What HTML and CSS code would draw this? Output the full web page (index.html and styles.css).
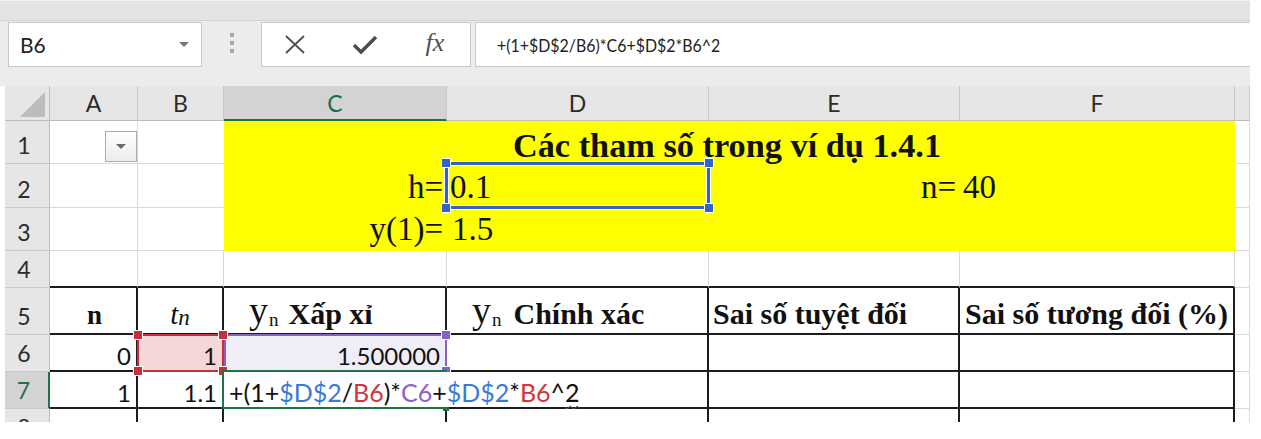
FILE: index.html
```html
<!DOCTYPE html>
<html>
<head>
<meta charset="utf-8">
<link rel="stylesheet" href="styles.css">
</head>
<body>
<div class="app">
  <div class="topband"></div>
  <div class="fbar">
    <div class="namebox"><span class="nb-text">B6</span><span class="caret"></span></div>
    <div class="grip"><i></i><i></i><i></i></div>
    <div class="btns">
      <span class="btn b-x"><svg width="22" height="19" viewBox="0 0 22 19"><path d="M2 1 L20 18 M20 1 L2 18" stroke="#4d4d4d" stroke-width="1.8" fill="none"/></svg></span>
      <span class="btn b-ok"><svg width="26" height="21" viewBox="0 0 26 21"><path d="M2 11 L9 18 L24 3" stroke="#4d4d4d" stroke-width="3.4" fill="none"/></svg></span>
      <span class="btn fx">fx</span>
    </div>
    <div class="finput"><span class="ftext">+(1+$D$2/B6)*C6+$D$2*B6^2</span></div>
  </div>
  <div class="sheetwrap">
    <div class="sheet">
      <div class="corner"><svg width="45" height="35" viewBox="0 0 45 35"><polygon points="15,31 40,31 40,6" fill="#bcbcbc"/></svg></div>
      <div class="ch">A</div><div class="ch">B</div><div class="ch csel">C</div><div class="ch">D</div><div class="ch">E</div><div class="ch">F</div><div class="ch"></div>

      <div class="rh">1</div>
      <div class="c a1"><span class="dd"><i></i></span></div>
      <div class="c nb"></div>
      <div class="c y tnr title">Các tham số trong ví dụ 1.4.1</div>
      <div class="c"></div>

      <div class="rh">2</div>
      <div class="c"></div>
      <div class="c nb"></div>
      <div class="c y tnr r2 right">h=</div>
      <div class="c y tnr r2 d2">0.1<span class="rng blue"><i class="hd tl"></i><i class="hd tr"></i><i class="hd bl"></i><i class="hd br"></i></span></div>
      <div class="c y tnr r2 right">n=</div>
      <div class="c y tnr r2 f2">40</div>
      <div class="c"></div>

      <div class="rh">3</div>
      <div class="c"></div>
      <div class="c nb"></div>
      <div class="c y tnr r3 right">y(1)=</div>
      <div class="c y tnr r3 d3">1.5</div>
      <div class="c y"></div>
      <div class="c y"></div>
      <div class="c"></div>

      <div class="rh">4</div>
      <div class="c bb"></div><div class="c bb"></div><div class="c bb"></div><div class="c bb"></div><div class="c bb"></div><div class="c bb"></div>
      <div class="c"></div>

      <div class="rh">5</div>
      <div class="c tb hdr center"><b class="bn">n</b></div>
      <div class="c tb hdr center"><span class="tt">t</span><span class="tsub">n</span></div>
      <div class="c tb hdr yn1"><span class="yy">y</span><span class="ysub">n</span><b class="lbl">Xấp xỉ</b></div>
      <div class="c tb hdr yn2"><span class="yy">y</span><span class="ysub">n</span><b class="lbl2">Chính xác</b></div>
      <div class="c tb hdr e5"><b>Sai số tuyệt đối</b></div>
      <div class="c tb hdr f5"><b>Sai số tương đối (%)</b></div>
      <div class="c"></div>

      <div class="rh">6</div>
      <div class="c tb num">0</div>
      <div class="c tb num b6">1<span class="rng red"><i class="hd tl"></i><i class="hd tr"></i><i class="hd bl"></i><i class="hd br"></i></span></div>
      <div class="c tb num c6">1.500000<span class="rng purple"><i class="hd tr"></i><i class="hd br"></i></span></div>
      <div class="c tb"></div><div class="c tb"></div><div class="c tb"></div>
      <div class="c"></div>

      <div class="rh rsel">7</div>
      <div class="c tb num">1</div>
      <div class="c tb num">1.1</div>
      <div class="c tb c7"><span class="act"><i class="gh"></i></span><span class="editor">+(1+<span class="fb">$D$2</span>/<span class="fr">B6</span>)*<span class="fp">C6</span>+<span class="fb">$D$2</span>*<span class="fr">B6</span>^<span class="sq">2</span></span></div>
      <div class="c tb"></div><div class="c tb"></div><div class="c tb"></div>
      <div class="c"></div>

      <div class="rh">8</div>
      <div class="c tb num">2</div>
      <div class="c tb num">1.2</div>
      <div class="c tb"></div><div class="c tb"></div><div class="c tb"></div><div class="c tb"></div>
      <div class="c"></div>
    </div>
  </div>
</div>
</body>
</html>
```

FILE: styles.css
```css
* { box-sizing: border-box; }
body { margin: 0; background: #fff; font-family: Lato, "Noto Sans", sans-serif; }

.app { width: 1250px; height: 422px; overflow: hidden; background: #e9e9e9; }

.topband { height: 21px; background: #e4e4e4; border-top: 1px solid #f4f4f4; border-bottom: 1px solid #d2d2d2; }

.fbar { display: flex; align-items: flex-start; height: 65px; padding-top: 1px; background: #ececec; }
.namebox { margin-left: 8px; width: 194px; height: 45px; background: #fff; border: 1px solid #c8c8c8; display: flex; align-items: center; justify-content: space-between; padding: 0 12px 0 11px; }
.nb-text { font-size: 21px; color: #222; }
.caret { width: 0; height: 0; border-left: 5px solid transparent; border-right: 5px solid transparent; border-top: 5px solid #767676; }
.grip { width: 59px; display: flex; flex-direction: column; align-items: center; gap: 4px; padding-top: 11px; }
.grip i { display: block; width: 4px; height: 4px; background: #a8a8a8; }
.btns { width: 210px; height: 45px; background: #fff; border: 1px solid #c8c8c8; display: flex; align-items: center; }
.btn { display: flex; justify-content: center; align-items: center; }
.b-x { width: 66px; }
.b-ok { width: 74px; }
.fx { width: 66px; font-family: "Liberation Serif", serif; font-style: italic; font-size: 26px; color: #505050; padding-bottom: 3px; }
.finput { margin-left: 4px; flex: 1; height: 45px; background: #fff; border: 1px solid #c8c8c8; border-right: none; padding-left: 21px; display: flex; align-items: center; color: #222; }
.ftext { font-size: 18px; display: inline-block; transform: scaleX(0.885); transform-origin: left center; white-space: nowrap; }

.sheetwrap { background: #fff; padding-left: 5px; height: 336px; overflow: hidden; }
.sheet { display: grid; grid-template-columns: 45px 88px 86px 223px 262px 251px 275px 15px; grid-template-rows: 35px 43px 44px 43px 37px 47px 37px 37px 37px; width: 1245px; }

.corner { background: #e6e6e6; border-right: 1px solid #bdbdbd; border-bottom: 1px solid #bdbdbd; }
.corner svg { display: block; }
.ch { background: #e6e6e6; border-right: 1px solid #c9c9c9; border-bottom: 1px solid #bdbdbd; display: flex; justify-content: center; align-items: center; font-size: 23px; color: #2b2b2b; }
.ch.csel { background: #d3d3d3; border-bottom: 2px solid #217346; color: #1d6b45; }
.rh { background: #e6e6e6; border-right: 1px solid #bdbdbd; border-bottom: 1px solid #cbcbcb; display: flex; justify-content: center; align-items: flex-end; font-size: 23px; line-height: 1; padding: 0 6px 6px 0; color: #2b2b2b; }
.rh.rsel { background: #d3d3d3; border-right: 2px solid #217346; color: #217346; }

.c { border-right: 1px solid #d9d9d9; border-bottom: 1px solid #d9d9d9; display: flex; align-items: flex-end; white-space: nowrap; font-size: 24px; line-height: 1; padding: 0 4px 2px; color: #111; position: relative; }
.c.nb { border-right-color: #fff; }
.c.y { background: #ffff00; border-right-color: #ffff00; border-bottom-color: #ffff00; }
.c.right { justify-content: flex-end; }
.c.center { justify-content: center; }
.tnr { font-family: "Liberation Serif", serif; font-size: 33px; }
.title { grid-column: span 4; justify-content: center; font-weight: bold; font-size: 34.3px; padding-bottom: 1px; padding-left: 0; }
.r2 { padding-bottom: 3px; padding-right: 3px; }
.r3 { padding-bottom: 4px; padding-right: 3px; }
.d2 { background: #d8de24; padding-left: 3px; }
.d3 { padding-left: 5px; }
.f2 { padding-left: 3px; }

.a1 { justify-content: flex-end; padding: 0 0 1px 0; }
.dd { width: 32px; height: 31px; border: 1px solid #acacac; background: linear-gradient(#ffffff, #ececec); display: flex; justify-content: center; align-items: center; }
.dd i { width: 0; height: 0; border-left: 5px solid transparent; border-right: 5px solid transparent; border-top: 5px solid #6a6a6a; }

.bb { border-bottom: 2px solid #1d1d1d; }
.tb { border-right: 2px solid #1d1d1d; border-bottom: 2px solid #1d1d1d; }

.hdr { font-family: "Liberation Serif", serif; font-size: 30px; padding-bottom: 4px; }
.hdr b { font-weight: bold; }
.bn { font-size: 27px; margin-left: 3px; }
.tt { font-style: italic; font-size: 29px; vertical-align: 10px; }
.tsub { font-style: italic; font-size: 23px; vertical-align: 1px; margin-left: 0; }
.yy { font-size: 38px; vertical-align: 7px; }
.ysub { font-size: 19px; vertical-align: -2px; margin-left: 1px; }
.yn1 { padding-left: 25px; }
.yn2 { padding-left: 25px; }
.lbl { margin-left: 10px; }
.lbl2 { margin-left: 12px; }
.e5 { padding-left: 4px; }
.f5 { padding-left: 5px; }

.num { justify-content: flex-end; padding-right: 5px; }
.b6 { background: #f4d7d8; }
.c6 { background: #efedf8; }

.rng { position: absolute; border: 2px solid; }
.rng.blue { left: -2px; top: -2px; right: -2px; bottom: -2px; border: 3px solid #2f65cb; box-shadow: 0 0 0 1px #fff, inset 0 0 0 1px #fff; z-index: 3; }
.rng.red { left: -1px; top: -1px; right: -2px; bottom: -2px; border-color: #c4303c; z-index: 4; }
.rng.purple { left: 0; top: -1px; right: -2px; bottom: -2px; border-color: #8a60c6; z-index: 3; }
.hd { position: absolute; width: 10px; height: 10px; border: 1px solid #fff; }
.blue .hd { background: #2f65cb; }
.red .hd { background: #c4303c; }
.purple .hd { background: #8a60c6; }
.blue .tl { left: -7px; top: -7px; }
.blue .tr { right: -7px; top: -7px; }
.blue .bl { left: -7px; bottom: -7px; }
.blue .br { right: -7px; bottom: -7px; }
.red .tl, .purple .tl { left: -6px; top: -6px; }
.red .tr, .purple .tr { right: -6px; top: -6px; }
.red .bl, .purple .bl { left: -6px; bottom: -6px; }
.red .br, .purple .br { right: -6px; bottom: -6px; }

.c7 { z-index: 5; }
.act { position: absolute; left: -2px; top: -2px; right: -2px; bottom: -2px; border: 2px solid #217346; }
.gh { position: absolute; right: -4px; bottom: -4px; width: 6px; height: 6px; background: #217346; }
.editor { position: absolute; left: 0; top: 0; bottom: 0; background: #fff; padding: 0 4px 2px 5px; display: flex; align-items: flex-end; font-size: 25px; line-height: 1; color: #111; z-index: 2; }
.fb { color: #3b79d9; }
.fr { color: #d2363d; }
.fp { color: #8b62c8; }
.sq { text-decoration: underline wavy #666; text-decoration-thickness: 1px; text-underline-offset: 3px; }
```
